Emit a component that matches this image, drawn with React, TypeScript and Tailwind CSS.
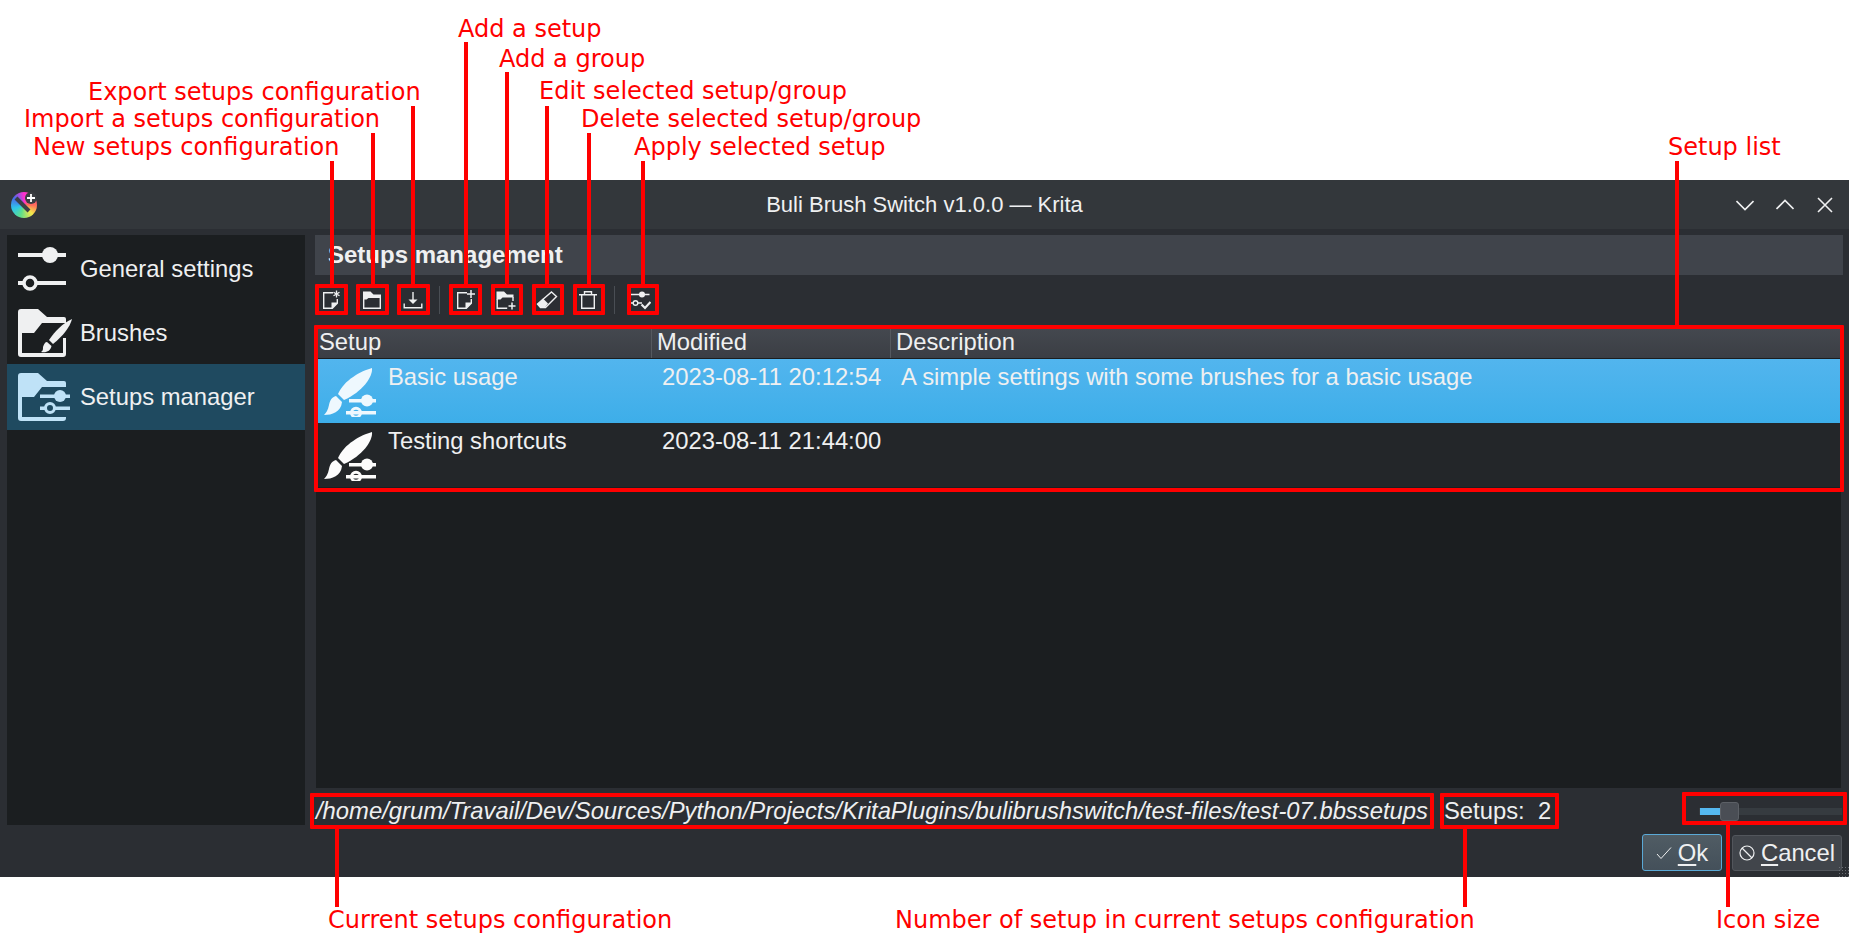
import type { ReactNode } from "react";

const INK = "#eff0f1";

// Red callouts drawn on top of the screenshot
const labels = [
    { text: "Add a setup", cls: "left-[458px] top-[15px]" },
    { text: "Add a group", cls: "left-[499px] top-[45px]" },
    { text: "Export setups configuration", cls: "left-[88px] top-[78px]" },
    { text: "Edit selected setup/group", cls: "left-[539px] top-[77px]" },
    { text: "Import a setups configuration", cls: "left-[24px] top-[105px]" },
    { text: "Delete selected setup/group", cls: "left-[581px] top-[105px]" },
    { text: "New setups configuration", cls: "left-[33px] top-[133px]" },
    { text: "Apply selected setup", cls: "left-[634px] top-[133px]" },
    { text: "Setup list", cls: "left-[1668px] top-[133px]" },
    { text: "Current setups configuration", cls: "left-[328px] top-[906px]" },
    { text: "Number of setup in current setups configuration", cls: "left-[895px] top-[906px]" },
    { text: "Icon size", cls: "left-[1716px] top-[906px]" },
];

const leaders = [
    "left-[330px] top-[161px] h-[124px]",
    "left-[371px] top-[133px] h-[152px]",
    "left-[411px] top-[106px] h-[179px]",
    "left-[464px] top-[42px] h-[243px]",
    "left-[505px] top-[72px] h-[213px]",
    "left-[545px] top-[106px] h-[179px]",
    "left-[587px] top-[133px] h-[152px]",
    "left-[641px] top-[161px] h-[124px]",
    "left-[1675px] top-[161px] h-[165px]",
    "left-[335px] top-[828px] h-[79px]",
    "left-[1463px] top-[828px] h-[79px]",
    "left-[1726px] top-[824px] h-[83px]",
];

const boxes = [
    "left-[315px] top-[284px] w-[33px] h-[31px]",
    "left-[356px] top-[284px] w-[33px] h-[31px]",
    "left-[397px] top-[284px] w-[33px] h-[31px]",
    "left-[449px] top-[284px] w-[33px] h-[31px]",
    "left-[491px] top-[284px] w-[32px] h-[31px]",
    "left-[532px] top-[284px] w-[32px] h-[31px]",
    "left-[573px] top-[284px] w-[32px] h-[31px]",
    "left-[627px] top-[284px] w-[32px] h-[31px]",
    "left-[314px] top-[325px] w-[1530px] h-[167px]",
    "left-[310px] top-[793px] w-[1124px] h-[36px]",
    "left-[1440px] top-[793px] w-[119px] h-[36px]",
    "left-[1682px] top-[792px] w-[165px] h-[33px]",
];

function ToolIcon({ children }: { children: ReactNode }) {
    return (
        <svg width="22" height="22" viewBox="0 0 22 22" fill="none" stroke={INK} strokeWidth="1.4">
            {children}
        </svg>
    );
}

const DocBody = () => (
    <>
        <path d="M13 3.7H3.7v15.6h8.6l5-5V10" />
        <path d="M11.5 20v-6.5H18z" fill={INK} stroke="none" />
    </>
);

const toolIcons = [
    <ToolIcon key="new">
        <DocBody />
        <path d="M16.5 1.5v7M13.5 3.2l6 3.6M19.5 3.2l-6 3.6" strokeWidth="1.3" />
    </ToolIcon>,
    <ToolIcon key="open">
        <path d="M2 2.5h7.5l3 3H20v3.5H7.5L5.5 10.5H2z" fill={INK} stroke="none" />
        <path d="M2.7 10v9.3h16.6V8" />
    </ToolIcon>,
    <ToolIcon key="export">
        <path d="M11 3v10" />
        <path d="M6.5 10.5h9L11 15z" fill={INK} stroke="none" />
        <path d="M2.2 14.5v4.3h17.6v-4.3" />
    </ToolIcon>,
    <ToolIcon key="add">
        <DocBody />
        <path d="M17 1v8M13 5h8" strokeWidth="1.5" />
    </ToolIcon>,
    <ToolIcon key="group">
        <path d="M1.5 2.5h7.5l3 3h6.5v3H7.5L5.5 10.5h-4z" fill={INK} stroke="none" />
        <path d="M2.2 10v9.3h10M18 8v4" />
        <path d="M17 13.5v7M13.5 17h7" strokeWidth="1.5" />
    </ToolIcon>,
    <ToolIcon key="edit">
        <path d="M15.5 3l5 4.500L9.500 18.500H4.500L1.500 15z" />
        <path d="M7 9.500l5 5L9 18.500H4.500L1.500 15z" fill={INK} stroke="none" />
    </ToolIcon>,
    <ToolIcon key="delete">
        <path d="M2 5.7h18M7.5 5.500V2.700h7v2.800M4.700 6v13.300h12.600V6" />
    </ToolIcon>,
    <ToolIcon key="apply">
        <path d="M1.500 5.500h19M1.500 14h2.500M9 14h4" strokeWidth="1.600" />
        <circle cx="13" cy="5.500" r="3" fill={INK} stroke="none" />
        <circle cx="6.500" cy="14" r="2.300" />
        <path d="M12.500 15.500l3.500 3.500 5.500-6" strokeWidth="2.200" />
    </ToolIcon>,
];

function SlidersIcon() {
    return (
        <svg width="48" height="48" viewBox="0 0 48 48" className="shrink-0">
            <rect x="0" y="8" width="48" height="4" fill={INK} />
            <circle cx="32" cy="10" r="8" fill={INK} />
            <rect x="0" y="36" width="48" height="4" fill={INK} />
            <circle cx="12" cy="38" r="6" fill="#1b1e20" stroke={INK} strokeWidth="3.500" />
        </svg>
    );
}

function BrushFolderIcon() {
    return (
        <svg width="54" height="48" viewBox="0 0 54 48" className="shrink-0" fill={INK}>
            <path d="M0 3q0-3 3-3h17l9 8h17q2 0 2 2v4H24l-8 10H0z" />
            <path d="M0 20h4v24h41V29h3v16q0 3-3 3H3q-3 0-3-3z" />
            <path d="M54 10c-2 8-9 17-19 25l-4-4C37 22 45 14 54 10z" />
            <path d="M29 33l4.500 4c-1 5-5 7-10.500 6 2-1 2-3 2-5 1-3 2-5 4-5z" />
        </svg>
    );
}

function SetupsFolderIcon() {
    const c = "#bfe2f7";
    return (
        <svg width="54" height="48" viewBox="0 0 54 48" className="shrink-0" fill={c}>
            <path d="M0 3q0-3 3-3h17l9 8h17q2 0 2 2v4H24l-8 10H0z" />
            <path d="M0 20h4v24h44v1q0 3-3 3H3q-3 0-3-3z" />
            <rect x="22" y="21.500" width="30" height="3.500" />
            <circle cx="42" cy="23" r="6" />
            <rect x="22" y="33.500" width="30" height="3.500" />
            <circle cx="32" cy="35" r="4.500" fill="#1f4a60" stroke={c} strokeWidth="3" />
        </svg>
    );
}

function SetupIcon({ color }: { color: string }) {
    return (
        <svg width="54" height="50" viewBox="0 0 54 50" className="shrink-0" fill={color}>
            <path d="M48 1c1 9-10 24-28 32l-6-6C20 13 37 4 48 1z" />
            <path d="M12 29c-4 1-6 4-7 9-1 5-3 8-5 10 8 0 17-3 18-13z" />
            <rect x="25" y="32" width="27" height="3.500" />
            <circle cx="43" cy="33.500" r="6" />
            <rect x="22" y="44" width="30" height="3.500" />
            <circle cx="32" cy="45.700" r="4.500" fill="none" stroke={color} strokeWidth="3" />
        </svg>
    );
}

function SidebarRow({ icon, label, active }: { icon: ReactNode; label: string; active?: boolean }) {
    return (
        <div className={`flex items-center pl-[11px] gap-[14px] ${active ? "h-[66px] -my-px bg-[#1f4a60]" : "h-[64px]"}`}>
            <div className="w-[48px] h-[48px] flex">{icon}</div>
            <span>{label}</span>
        </div>
    );
}

function SetupRow({ name, modified, description, selected }: { name: string; modified: string; description?: string; selected?: boolean }) {
    return (
        <div className={`grid grid-cols-[336px_239px_1fr] h-[64px] ${selected ? "bg-gradient-to-b from-[#52b5ee] to-[#3daee9]" : "bg-[#232629]"}`}>
            <div className="flex pl-[8px] pt-[8px] gap-[10px]">
                <SetupIcon color={selected ? "#eef8fe" : "#fcfcfc"} />
                <span className="leading-[20px]">{name}</span>
            </div>
            <div className="pl-[10px] pt-[8px] leading-[20px]">{modified}</div>
            <div className="pl-[10px] pt-[8px] leading-[20px]">{description}</div>
        </div>
    );
}

function HeaderCell({ children, first, last }: { children: string; first?: boolean; last?: boolean }) {
    return (
        <div className={`leading-[26px] ${first ? "pl-[3px]" : "pl-[5px]"} ${last ? "" : "border-r-[1.5px] border-[#55595f]"}`}>
            {children}
        </div>
    );
}

export default function App() {
    return (
        <div className="relative w-[1849px] h-[944px] overflow-hidden bg-white font-['Liberation_Sans',sans-serif] text-[23.8px] text-[#eff0f1]">
            <div className="h-[180px]" />

            <div className="h-[697px] flex flex-col bg-[#2b2e33]">
                {/* title bar */}
                <div className="h-[49px] shrink-0 flex items-center bg-[#33373b] text-[22px] relative">
                    <div className="ml-[11px] relative w-[26px] h-[26px] rounded-full bg-[conic-gradient(#ff2fd0,#ff6a5a_25%,#f5e84a_38%,#5fe08a_55%,#2fc6ea_70%,#4a6ae8_85%,#ff2fd0)]">
                        <svg width="26" height="26" viewBox="0 0 26 26" className="absolute inset-0">
                            <path d="M5 6l13 13" stroke="#3c3f47" strokeWidth="4" />
                            <circle cx="20" cy="6" r="6" fill="#3a3d42" />
                            <path d="M20 2v8M16 6h8" stroke="#fff" strokeWidth="1.800" />
                        </svg>
                    </div>
                    <div className="flex-1 text-center pl-[76px]">Buli Brush Switch v1.0.0 — Krita</div>
                    <div className="flex items-center gap-[22px] pr-[15px]">
                        <svg width="18" height="18" viewBox="0 0 18 18" fill="none" stroke={INK} strokeWidth="1.600"><path d="M0.500 5l8.500 8.500L17.500 5" /></svg>
                        <svg width="18" height="18" viewBox="0 0 18 18" fill="none" stroke={INK} strokeWidth="1.600"><path d="M0.500 13L9 4.500 17.500 13" /></svg>
                        <svg width="18" height="18" viewBox="0 0 18 18" fill="none" stroke={INK} strokeWidth="1.600"><path d="M2 2l14 14M16 2L2 16" /></svg>
                    </div>
                </div>

                {/* body */}
                <div className="flex-1 flex pl-[7px] pr-[6px] pt-[6px] gap-[10px] min-h-0">
                    <div className="w-[298px] h-[590px] shrink-0 bg-[#1b1e20] pt-[2px]">
                        <SidebarRow icon={<SlidersIcon />} label="General settings" />
                        <SidebarRow icon={<BrushFolderIcon />} label="Brushes" />
                        <SidebarRow icon={<SetupsFolderIcon />} label="Setups manager" active />
                    </div>

                    <div className="flex-1 flex flex-col min-w-0">
                        <div className="h-[40px] shrink-0 bg-[#40444b] pl-[13px] flex items-center font-bold text-[24px]">Setups management</div>

                        <div className="h-[31px] mt-[9px] shrink-0 flex items-center pl-[5px]">
                            {toolIcons.map((icon, i) => (
                                <div key={i} className="flex items-center">
                                    <div className="w-[22px] h-[22px] mr-[19px]">{icon}</div>
                                    {(i === 2 || i === 6) && <div className="w-[1px] h-[28px] bg-[#4a4e54] -ml-[4px] mr-[14px]" />}
                                </div>
                            ))}
                        </div>

                        <div className="mt-[14px] ml-[1px] mr-[2px] h-[459px] shrink-0 flex flex-col bg-[#1b1e20]">
                            <div className="grid grid-cols-[336px_239px_1fr] h-[30px] shrink-0 bg-gradient-to-b from-[#44484f] to-[#3b3e44] border-b border-[#1b1e20]">
                                <HeaderCell first>Setup</HeaderCell>
                                <HeaderCell>Modified</HeaderCell>
                                <HeaderCell last>Description</HeaderCell>
                            </div>
                            <SetupRow name="Basic usage" modified="2023-08-11 20:12:54" description="A simple settings with some brushes for a basic usage" selected />
                            <SetupRow name="Testing shortcuts" modified="2023-08-11 21:44:00" />
                        </div>

                        <div className="mt-[5px] -ml-[5px] h-[36px] shrink-0 flex items-center">
                            <span className="italic pl-[6px] w-[1124px] whitespace-nowrap">/home/grum/Travail/Dev/Sources/Python/Projects/KritaPlugins/bulibrushswitch/test-files/test-07.bbssetups</span>
                            <span className="ml-[10px] whitespace-pre">Setups:  2</span>
                            <div className="ml-auto mr-[1px] w-[143px] flex items-center h-[7px] bg-[#363b40]">
                                <div className="w-[21px] ml-[1px] h-[7px] bg-[#55b8f0]" />
                                <div className="w-[19px] h-[19px] rounded-[3px] bg-[#4a4e55] border border-[#5c6066] shrink-0 -ml-px" />
                            </div>
                        </div>
                    </div>
                </div>

                {/* dialog buttons */}
                <div className="h-[43px] shrink-0 flex justify-end items-start gap-[10px] pr-[7px]">
                    <div className="w-[80px] h-[37px] rounded-[3px] flex items-center justify-center gap-[6px] bg-gradient-to-b from-[#505c64] to-[#44505a] border border-[#5aa9d6]">
                        <svg width="16" height="14" viewBox="0 0 16 14" fill="none" stroke={INK} strokeWidth="1"><path d="M1 8l4 4.500L15 1.500" /></svg>
                        <span><span className="underline decoration-2 underline-offset-[3px]">O</span>k</span>
                    </div>
                    <div className="w-[110px] h-[36px] mt-[1px] rounded-[3px] flex items-center justify-center gap-[6px] bg-[#41454b] border border-[#52565c]">
                        <svg width="16" height="16" viewBox="0 0 16 16" fill="none" stroke={INK} strokeWidth="1.200"><circle cx="8" cy="8" r="7" /><path d="M3 3l10 10" /></svg>
                        <span><span className="underline decoration-2 underline-offset-[3px]">C</span>ancel</span>
                    </div>
                </div>
            </div>

            {/* resize grip */}
            <div className="absolute left-[1838px] top-[866px] w-[11px] h-[11px] bg-[radial-gradient(#6a6e74_1px,transparent_1px)] bg-[length:3px_3px]" />

            {/* annotations */}
            {boxes.map(cls => (
                <div key={cls} className={`absolute border-[4px] border-[#ff0000] rounded-[1px] ${cls}`} />
            ))}
            {leaders.map(cls => (
                <div key={cls} className={`absolute w-[4px] bg-[#ff0000] ${cls}`} />
            ))}
            {labels.map(label => (
                <div key={label.text} className={`absolute whitespace-nowrap font-['DejaVu_Sans',sans-serif] text-[24px] leading-[28px] text-[#ff0000] ${label.cls}`}>
                    {label.text}
                </div>
            ))}
        </div>
    );
}
